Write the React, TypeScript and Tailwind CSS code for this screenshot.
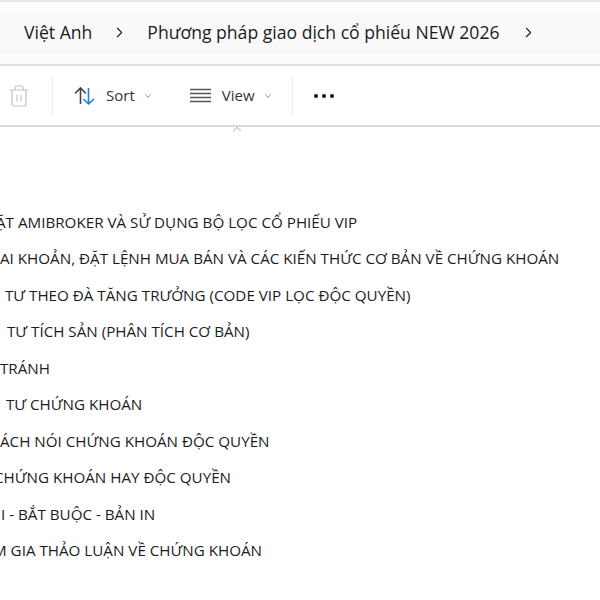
import { ChevronDown, ChevronRight, ChevronUp, Trash2 } from "lucide-react"

const rows = [
  { text: "ẶT AMIBROKER VÀ SỬ DỤNG BỘ LỌC CỔ PHIẾU VIP", cls: "-ml-[4px]" },
  { text: "AI KHOẢN, ĐẶT LỆNH MUA BÁN VÀ CÁC KIẾN THỨC CƠ BẢN VỀ CHỨNG KHOÁN", cls: "ml-0" },
  { text: "TƯ THEO ĐÀ TĂNG TRƯỞNG (CODE VIP LỌC ĐỘC QUYỀN)", cls: "ml-[5px]" },
  { text: "TƯ TÍCH SẢN (PHÂN TÍCH CƠ BẢN)", cls: "ml-[7px]" },
  { text: "TRÁNH", cls: "ml-0" },
  { text: "TƯ CHỨNG KHOÁN", cls: "ml-[6px]" },
  { text: "ÁCH NÓI CHỨNG KHOÁN ĐỘC QUYỀN", cls: "ml-0" },
  { text: "CHỨNG KHOÁN HAY ĐỘC QUYỀN", cls: "-ml-[6px]" },
  { text: "I - BẮT BUỘC - BẢN IN", cls: "ml-px" },
  { text: "M GIA THẢO LUẬN VỀ CHỨNG KHOÁN", cls: "-ml-[7px]" },
]

function SortIcon() {
  return (
    <svg width="24" height="22" viewBox="0 0 24 22" fill="none" strokeWidth="1.6">
      <path d="M7.5 19V3M2 8.5 7.5 3l5.5 5.5" stroke="#444" />
      <path d="M15.5 3v16M10.5 14l5 5 5.5-5" stroke="#1a80d8" />
    </svg>
  )
}

function ViewIcon() {
  return (
    <svg width="22" height="16" viewBox="0 0 22 16" fill="none" stroke="#555" strokeWidth="1.3">
      <path d="M0 1.5h21M0 5.5h21M0 9.5h21M0 13.5h21" />
    </svg>
  )
}

export default function App() {
  return (
    <div className="h-[600px] w-[600px] overflow-hidden bg-white font-['Open_Sans','Noto_Sans',sans-serif] text-[#1c1c1c]">
      <div className="h-[2px] bg-[#e6e6e6]" />
      <div className="h-[62px] bg-[#fcfcfc] pt-[10px]">
        <div className="flex h-[41px] items-center bg-[#f9f9f9] pl-6 text-[17.6px]">
          <span>Việt Anh</span>
          <ChevronRight className="ml-[19px] mr-[19px] h-[17px] w-[17px]" strokeWidth={1.5} />
          <span>Phương pháp giao dịch cổ phiếu NEW 2026</span>
          <ChevronRight className="ml-[20px] h-[17px] w-[17px]" strokeWidth={1.5} />
        </div>
      </div>
      <div className="h-[2px] bg-[#dedede]" />
      <div className="relative flex h-[61px] items-center border-b-2 border-[#d9d9d9] text-[15px] text-[#333]">
        <Trash2 className="ml-[7px] h-[24px] w-[24px] text-[#c4c4c4]" strokeWidth={1.2} />
        <div className="ml-[21px] h-[40px] w-px bg-[#ececec]" />
        <div className="ml-[20px]"><SortIcon /></div>
        <span className="ml-[9px]">Sort</span>
        <ChevronDown className="ml-[8px] h-[10px] w-[10px] text-[#777]" />
        <div className="ml-[37px]"><ViewIcon /></div>
        <span className="ml-[10px]">View</span>
        <ChevronDown className="ml-[8px] h-[10px] w-[10px] text-[#777]" />
        <div className="ml-[19px] h-[40px] w-px bg-[#ececec]" />
        <div className="ml-[21px] flex gap-[4px]">
          <span className="h-1 w-1 rounded-full bg-[#111]" />
          <span className="h-1 w-1 rounded-full bg-[#111]" />
          <span className="h-1 w-1 rounded-full bg-[#111]" />
        </div>
        <ChevronUp className="absolute bottom-[-11px] left-[230px] h-[14px] w-[14px] text-[#999]" strokeWidth={1.5} />
      </div>
      <div className="pt-[77px] text-[15.2px]">
        {rows.map((r) => (
          <div key={r.text} className={`flex h-[36.5px] items-center whitespace-nowrap ${r.cls}`}>
            {r.text}
          </div>
        ))}
      </div>
    </div>
  )
}
